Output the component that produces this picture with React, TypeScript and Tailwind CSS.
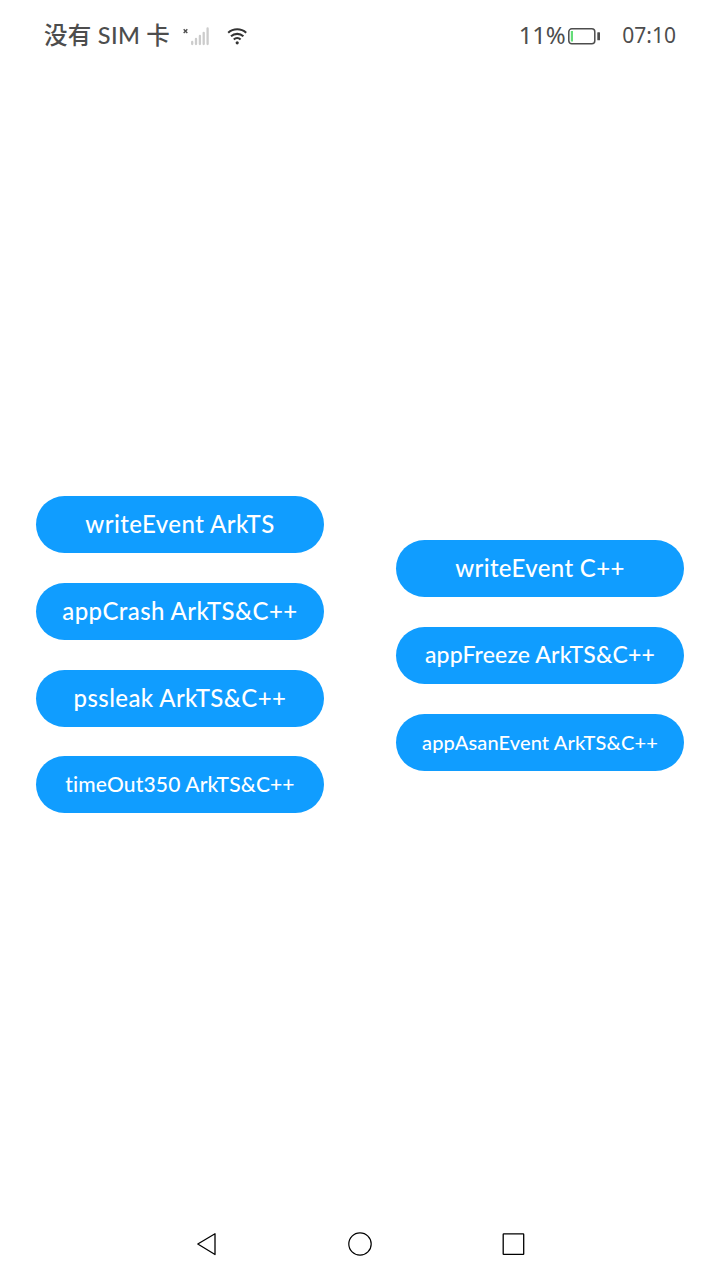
import type { ReactNode } from "react";

function PillButton({ children, className }: { children: ReactNode; className: string }) {
  return (
    <button
      type="button"
      className={`flex h-[57px] w-[288px] items-center justify-center rounded-full bg-[#109dff] pb-[2px] font-['Lato','Noto_Sans',sans-serif] font-medium whitespace-nowrap text-white [font-variant-ligatures:none] ${className}`}
    >
      {children}
    </button>
  );
}

function StatusBar() {
  return (
    <header className="flex h-[72px] items-center justify-between pr-[44px] pl-[44px] text-[#4d4d4d]">
      <div className="flex items-center">
        <span className="w-[138px] pb-[2px] font-['Lato','Noto_Sans_CJK_SC',sans-serif] text-[23.5px] leading-[30px] font-medium tracking-[0.3px] whitespace-nowrap">
          没有 SIM 卡
        </span>
        <svg width="30" height="24" viewBox="0 0 30 24" fill="none">
          <path d="M1.7 5.3l3.6 3.6M5.3 5.3L1.7 8.9" stroke="#4d4d4d" strokeWidth="1.4" />
          <path
            d="M10.2 18v2M14 15v5M17.9 12v8M21.7 8.8v11.2M25.6 4.5v15.5"
            stroke="#cccccc"
            strokeWidth="2.3"
            strokeLinecap="round"
          />
        </svg>
        <svg width="24" height="24" viewBox="0 0 24 24" fill="none" className="ml-[13px]">
          <path
            d="M3.200 8.700a13.500 13.500 0 0 1 18 0M6 12.200a9.300 9.300 0 0 1 12.400 0M8.800 15.500a5 5 0 0 1 6.800 0"
            stroke="#333"
            strokeWidth="2.100"
          />
          <circle cx="12.200" cy="18.800" r="1.600" fill="#333" />
        </svg>
      </div>
      <div className="flex items-center">
        <span className="pb-[2px] font-['Noto_Sans',sans-serif] text-[24px] leading-[30px] tracking-[-0.3px]">11%</span>
        <svg width="34" height="18" viewBox="0 0 34 18" fill="none" className="ml-[2px]">
          <rect x="1.800" y="1.800" width="26" height="15" rx="3" stroke="#4d4d4d" strokeWidth="1.500" />
          <rect x="3.800" y="4" width="2.200" height="10.500" fill="#64dc78" />
          <rect x="30.300" y="5.300" width="2.700" height="8" rx="0.500" fill="#4d4d4d" />
        </svg>
        <span className="ml-[21px] pb-[2px] font-['Noto_Sans',sans-serif] text-[21px] leading-[30px]">07:10</span>
      </div>
    </header>
  );
}

function NavigationBar() {
  return (
    <nav className="flex h-[72px] items-center justify-center gap-[125px] text-black">
      <svg width="28" height="28" viewBox="0 0 28 28" fill="none" stroke="currentColor" strokeWidth="1.300">
        <path d="M4.800 14L22 3.800v20.700z" strokeLinejoin="round" />
      </svg>
      <svg width="28" height="28" viewBox="0 0 28 28" fill="none" stroke="currentColor" strokeWidth="1.200">
        <circle cx="14" cy="14" r="11.200" />
      </svg>
      <svg width="28" height="28" viewBox="0 0 28 28" fill="none" stroke="currentColor" strokeWidth="1.300">
        <rect x="4.200" y="3.900" width="20.500" height="20.500" rx="0.500" />
      </svg>
    </nav>
  );
}

export default function App() {
  return (
    <div className="flex h-screen w-full flex-col bg-white">
      <StatusBar />
      <main className="flex flex-1 items-start justify-between px-9">
        <div className="flex flex-col gap-[30px] pt-[424px]">
          <PillButton className="text-[24px] tracking-[0.43px]">writeEvent ArkTS</PillButton>
          <PillButton className="text-[24px] tracking-[0.4px]">appCrash ArkTS&amp;C++</PillButton>
          <PillButton className="text-[24px] tracking-[0.4px]">pssleak ArkTS&amp;C++</PillButton>
          <PillButton className="-mt-px text-[21px] tracking-[0.15px]">timeOut350 ArkTS&amp;C++</PillButton>
        </div>
        <div className="flex flex-col gap-[30px] pt-[468px]">
          <PillButton className="text-[24px] tracking-[0.35px]">writeEvent C++</PillButton>
          <PillButton className="text-[23px] tracking-[0.15px]">appFreeze ArkTS&amp;C++</PillButton>
          <PillButton className="text-[20px] tracking-[0.13px]">appAsanEvent ArkTS&amp;C++</PillButton>
        </div>
      </main>
      <NavigationBar />
    </div>
  );
}
